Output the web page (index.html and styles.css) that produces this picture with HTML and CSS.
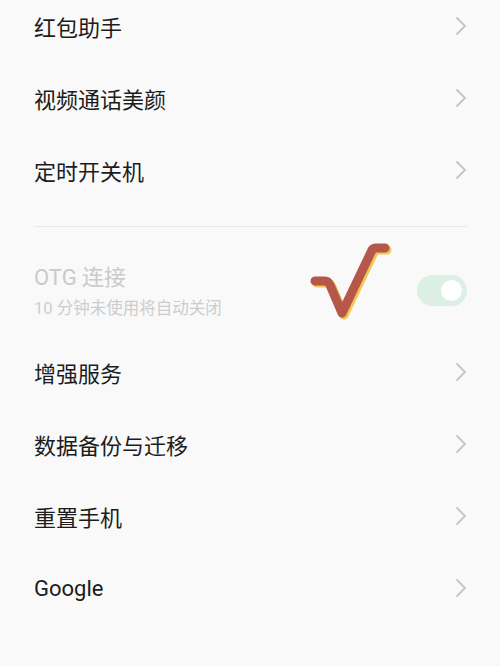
FILE: index.html
```html
<!DOCTYPE html>
<html lang="zh-CN">
  <head>
    <meta charset="UTF-8" />
    <meta name="viewport" content="width=device-width, initial-scale=1.0" />
    <title>其他设置</title>
    <link rel="stylesheet" href="styles.css">
  </head>
  <body>
    <div class="page">
      <ul class="list list-top">
        <li class="row"><span>红包助手</span><svg class="chevron" viewBox="0 0 12 20"><path d="M1.5 1.5 L10 10 L1.5 18.5" /></svg></li>
        <li class="row"><span>视频通话美颜</span><svg class="chevron" viewBox="0 0 12 20"><path d="M1.5 1.5 L10 10 L1.5 18.5" /></svg></li>
        <li class="row"><span>定时开关机</span><svg class="chevron" viewBox="0 0 12 20"><path d="M1.5 1.5 L10 10 L1.5 18.5" /></svg></li>
      </ul>

      <div class="divider"></div>

      <div class="otg">
        <div class="otg-text">
          <div class="otg-title">OTG 连接</div>
          <div class="otg-sub">10 分钟未使用将自动关闭</div>
        </div>
        <div class="toggle"><span class="knob"></span></div>
      </div>

      <ul class="list">
        <li class="row"><span>增强服务</span><svg class="chevron" viewBox="0 0 12 20"><path d="M1.5 1.5 L10 10 L1.5 18.5" /></svg></li>
        <li class="row"><span>数据备份与迁移</span><svg class="chevron" viewBox="0 0 12 20"><path d="M1.5 1.5 L10 10 L1.5 18.5" /></svg></li>
        <li class="row"><span>重置手机</span><svg class="chevron" viewBox="0 0 12 20"><path d="M1.5 1.5 L10 10 L1.5 18.5" /></svg></li>
        <li class="row"><span>Google</span><svg class="chevron" viewBox="0 0 12 20"><path d="M1.5 1.5 L10 10 L1.5 18.5" /></svg></li>
      </ul>

      <!-- hand-drawn tick over the OTG row -->
      <svg class="mark" viewBox="0 0 90 90">
        <path class="mark-shadow" d="M12 45 L22 45 Q25 45 27 49 L39 77 L69 14 Q70 12 73 12 L82 12" />
        <path class="mark-main" d="M10 43 L20 43 Q23 43 25 47 L37 75 L67 12 Q68 10 71 10 L80 10" />
      </svg>
    </div>
  </body>
</html>
```

FILE: styles.css
```css
body {
  margin: 0;
  background: #f9f9f9;
  font-family: Roboto, "Noto Sans CJK SC", sans-serif;
  color: #1c1c1c;
}
.page {
  position: relative;
  height: 666px;
  overflow: hidden;
  padding: 0 33px 0 34px;
}
.list {
  list-style: none;
  margin: 0;
  padding: 0;
}
.list-top {
  margin-top: -10px;
}
.row {
  height: 72px;
  display: flex;
  align-items: center;
  justify-content: space-between;
  font-size: 22px;
}
.chevron {
  width: 12px;
  height: 20px;
  fill: none;
  stroke: #c4c4c4;
  stroke-width: 1.8;
}
.divider {
  margin-top: 20px;
  height: 1px;
  background: #e9e9e9;
}
.otg {
  height: 109px;
  box-sizing: border-box;
  padding-top: 36px;
  display: flex;
  justify-content: space-between;
  align-items: flex-start;
}
.otg-title {
  font-size: 22px;
  line-height: 30px;
  color: #cacaca;
}
.otg-sub {
  margin-top: 5px;
  font-size: 16.5px;
  line-height: 22px;
  color: #cdcdcd;
}
.toggle {
  margin-top: 12px;
  width: 50px;
  height: 31px;
  box-sizing: border-box;
  padding: 0 5px;
  border-radius: 16px;
  background: #dcefe5;
  display: flex;
  align-items: center;
  justify-content: flex-end;
}
.knob {
  width: 21px;
  height: 21px;
  border-radius: 50%;
  background: #ffffff;
}
.mark {
  position: absolute;
  left: 305px;
  top: 238px;
  width: 90px;
  height: 90px;
  fill: none;
  stroke-linecap: round;
  stroke-linejoin: round;
  stroke-width: 9;
}
.mark-shadow {
  stroke: #f0c654;
}
.mark-main {
  stroke: #b5584a;
}
```
